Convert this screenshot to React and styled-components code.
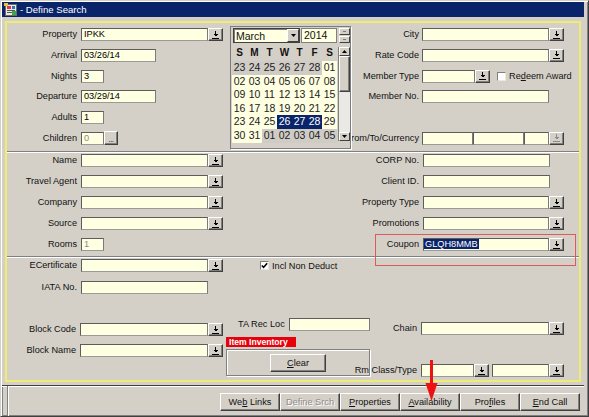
import React from "react";
import styled, { createGlobalStyle } from "styled-components";

const FONT = `"Liberation Sans", Arial, sans-serif`;

const GlobalStyle = createGlobalStyle`
  html, body { margin: 0; padding: 0; background: #D4D0C8; }
  body { font-family: ${FONT}; }
  *, *::before, *::after { box-sizing: border-box; }
`;

const Window = styled.div`
  position: relative;
  width: 589px;
  height: 417px;
  background: #d4d0c8;
  border: 1px solid;
  border-color: #d4d0c8 #404040 #404040 #d4d0c8;
  box-shadow: inset 1px 1px 0 #fff, inset -1px -1px 0 #808080;
  padding: 1px 4px 0 1px;
  display: flex;
  flex-direction: column;
  font-family: ${FONT};
  font-size: 9.2px;
  color: #111;
  overflow: hidden;
`;

const TitleBar = styled.div`
  flex: none;
  height: 15px;
  background: #0a246a;
  display: flex;
  align-items: center;
  gap: 2px;
  padding-left: 2px;
  color: #fff;
  font-size: 9.6px;
`;

const Panel = styled.div`
  flex: none;
  margin: 4px 3px 0 3px;
  height: 361px;
  border: 2px solid #eeec72;
  display: flex;
  flex-direction: column;
`;

const TopSection = styled.div`
  flex: none;
  height: 128px;
  display: grid;
  grid-template-columns: 332px 1fr;
  padding-top: 5px;
`;

const MidSection = styled.div`
  flex: none;
  height: 103px;
  display: grid;
  grid-template-columns: 332px 1fr;
  padding-top: 1px;
`;

const BottomSection = styled.div`
  flex: 1;
  display: grid;
  grid-template-columns: 219px 144px 1fr;
`;

const Sep = styled.div`
  flex: none;
  height: 2px;
  border-top: 1px solid #808080;
  border-bottom: 1px solid #fff;
`;

const Column = styled.div`
  display: flex;
  flex-direction: column;
  gap: ${(p) => p.$gap ?? 0}px;
  padding-left: ${(p) => p.$pl ?? 0}px;
`;

const Row = styled.div`
  display: flex;
  align-items: center;
  height: 13px;
  flex: none;
  margin-top: ${(p) => p.$mt ?? 0}px;
  padding-left: ${(p) => p.$pl ?? 0}px;
`;

const Label = styled.div`
  flex: none;
  width: ${(p) => (p.$w ? `${p.$w}px` : "auto")};
  display: flex;
  justify-content: flex-end;
  white-space: nowrap;
  margin-right: ${(p) => p.$gap ?? 4}px;
  line-height: 13px;
`;

const Field = styled.div`
  flex: none;
  width: ${(p) => p.$w}px;
  height: 13px;
  background: #ffffe1;
  border: 1px solid;
  border-color: #5c5c5c #7a7a7a #9a9a9a #5c5c5c;
  padding: 0 ${(p) => p.$pad ?? 2}px;
  line-height: 11px;
  color: ${(p) => (p.$disabled ? "#8a8a8a" : "#000")};
  white-space: nowrap;
  overflow: hidden;
`;

const Selected = styled.span`
  background: #0a246a;
  color: #fff;
  padding: 0 1px;
`;

const DropBtn = styled.div`
  flex: none;
  width: 15px;
  height: 13px;
  background: #d4d0c8;
  border: 1px solid;
  border-color: #fff #404040 #404040 #fff;
  box-shadow: inset -1px -1px 0 #808080;
  display: flex;
  align-items: center;
  justify-content: center;
  margin-left: ${(p) => p.$ml ?? 0}px;
`;

const DotsBtn = styled.div`
  flex: none;
  width: 14px;
  height: 14px;
  background: #d4d0c8;
  border: 1px solid;
  border-color: #fff #404040 #404040 #fff;
  box-shadow: inset -1px -1px 0 #808080;
  display: flex;
  align-items: flex-end;
  justify-content: center;
  font-size: 8px;
  line-height: 9px;
  letter-spacing: -0.5px;
`;

const CheckBox = styled.div`
  flex: none;
  width: 9px;
  height: 9px;
  background: #fff;
  border: 1px solid;
  border-color: #808080 #e8e8e8 #e8e8e8 #808080;
  margin-left: ${(p) => p.$ml ?? 0}px;
  margin-right: 3px;
  display: flex;
  align-items: center;
  justify-content: center;
`;

const U = styled.span`
  text-decoration: underline;
`;

const RedTag = styled.div`
  width: 70px;
  height: 10px;
  margin-top: 6px;
  background: #e8000a;
  color: #fff;
  font-weight: bold;
  font-size: 8.6px;
  line-height: 10px;
  padding-left: 3px;
  white-space: nowrap;
`;

const GroupBox = styled.div`
  width: 144px;
  height: 27px;
  margin-top: 2px;
  border: 1px solid #808080;
  box-shadow: inset 1px 1px 0 #fff, 1px 1px 0 #fff;
  display: flex;
  justify-content: center;
  padding-top: 4px;
`;

const Btn = styled.div`
  flex: none;
  width: ${(p) => p.$w ?? 60}px;
  height: 18px;
  display: flex;
  align-items: center;
  justify-content: center;
  background: #d4d0c8;
  border: 1px solid;
  border-color: #fff #404040 #404040 #fff;
  box-shadow: inset -1px -1px 0 #808080;
  color: ${(p) => (p.$disabled ? "#8c8c8c" : "#111")};
  text-shadow: ${(p) => (p.$disabled ? "1px 1px 0 #fff" : "none")};
  white-space: nowrap;
`;

const ButtonBar = styled.div`
  flex: 1;
  margin-top: 3px;
  border-top: 1px solid #404040;
  box-shadow: inset 0 1px 0 #fff, inset 1px 0 0 #808080;
  display: flex;
`;

const BarFrame = styled.div`
  flex: 1;
  margin-left: 5px;
  border-left: 1px solid #808080;
  box-shadow: inset 1px 0 0 #fff;
  display: flex;
  justify-content: flex-end;
  align-items: flex-start;
  padding: 7px 4px 0 0;
`;

/* ---------- calendar popup (overlays the form) ---------- */

const Calendar = styled.div`
  position: absolute;
  left: 229px;
  top: 25px;
  width: 121px;
  height: 123px;
  background: #d4d0c8;
  border: 1px solid #7c7c7c;
  box-shadow: 1px 1px 0 #fff;
  padding: 1px 0 0 1px;
  display: flex;
  flex-direction: column;
`;

const CalTop = styled.div`
  display: flex;
  height: 15px;
  margin-left: 1px;
`;

const MonthCombo = styled.div`
  width: 67px;
  height: 15px;
  background: #ffffe1;
  border: 1px solid #404040;
  box-shadow: inset 1px 1px 0 #808080;
  display: flex;
  align-items: center;
  justify-content: space-between;
  padding-left: 2px;
  font-size: 10.5px;
`;

const ComboArrow = styled.div`
  width: 12px;
  height: 13px;
  background: #d4d0c8;
  border: 1px solid;
  border-color: #fff #404040 #404040 #fff;
  display: flex;
  align-items: center;
  justify-content: center;
`;

const YearField = styled.div`
  width: 36px;
  height: 15px;
  margin-left: 1px;
  background: #ffffe1;
  border: 1px solid #808080;
  padding-left: 2px;
  font-size: 10.5px;
  line-height: 13px;
`;

const Spinner = styled.div`
  width: 11px;
  margin-left: 2px;
  display: flex;
  flex-direction: column;
  gap: 1px;
`;

const SpinBtn = styled.div`
  height: 8px;
  background: #d4d0c8;
  border: 1px solid;
  border-color: #fff #404040 #404040 #fff;
  display: flex;
  align-items: center;
  justify-content: center;
  &::after {
    content: "";
    width: 3px;
    height: 1px;
    background: #7a7a7a;
  }
`;

const CalBody = styled.div`
  display: flex;
  margin-top: 4px;
`;

const DaysCol = styled.div`
  width: 105px;
  display: flex;
  flex-direction: column;
`;

const WeekHead = styled.div`
  display: grid;
  grid-template-columns: repeat(7, 15px);
  height: 14px;
  font-weight: bold;
  font-size: 10px;
  line-height: 11px;
  text-align: center;
`;

const DayGrid = styled.div`
  display: grid;
  grid-template-columns: repeat(7, 15px);
  grid-auto-rows: 13.6px;
`;

const Day = styled.div`
  font-size: 10.5px;
  line-height: 13.6px;
  text-align: center;
  color: ${(p) => (p.$kind === "sel" ? "#fff" : "#222")};
  background: ${(p) =>
    p.$kind === "sel" ? "#0a246a" : p.$kind === "other" ? "#cfccc6" : "#ffffe1"};
`;

const ScrollBar = styled.div`
  width: 12px;
  height: 94px;
  margin-left: 1px;
  display: flex;
  flex-direction: column;
  border-left: 1px solid #808080;
`;

const ScrollBtn = styled.div`
  flex: none;
  height: 9px;
  background: #d4d0c8;
  border: 1px solid;
  border-color: #fff #404040 #404040 #fff;
  display: flex;
  align-items: center;
  justify-content: center;
`;

const Thumb = styled.div`
  flex: none;
  height: 36px;
  background: #d4d0c8;
  border: 1px solid;
  border-color: #fff #404040 #404040 #fff;
  box-shadow: inset -1px -1px 0 #808080;
`;

const Track = styled.div`
  flex: 1;
  background: #ebe9e4;
`;

/* ---------- annotations ---------- */

const RedBox = styled.div`
  position: absolute;
  left: 374px;
  top: 233px;
  width: 201px;
  height: 32px;
  border: 1px solid #dd5a5a;
  pointer-events: none;
`;

const Arrow = styled.svg`
  position: absolute;
  left: 424px;
  top: 359px;
`;

/* ---------- icons ---------- */

const LovIcon = ({ disabled }) => {
  const c = disabled ? "#8a8a8a" : "#000";
  return (
    <svg width="7" height="8" viewBox="0 0 7 8" shapeRendering="crispEdges">
      <rect x="3" y="0" width="1" height="3" fill={c} />
      <polygon points="1,3 6,3 3.5,5.5" fill={c} />
      <rect x="0" y="7" width="7" height="1" fill={c} />
    </svg>
  );
};

const Tri = ({ up }) => (
  <svg width="5" height="3" viewBox="0 0 5 3">
    <polygon points={up ? "0,3 5,3 2.5,0" : "0,0 5,0 2.5,3"} fill="#000" />
  </svg>
);

const Check = () => (
  <svg width="7" height="7" viewBox="0 0 7 7">
    <path d="M0.8 3.4 L2.6 5.3 L6.2 1.2" stroke="#000" strokeWidth="1.5" fill="none" />
  </svg>
);

const AppIcon = () => (
  <svg width="14" height="14" viewBox="0 0 14 14">
    <rect x="1.5" y="1.5" width="11" height="11" fill="#efe9dc" stroke="#6a6a6a" />
    <rect x="3" y="3" width="4" height="3" fill="#d23c4a" />
    <rect x="8" y="3" width="3" height="3" fill="#2f6fd0" />
    <rect x="3" y="7" width="8" height="1" fill="#555" />
    <rect x="3" y="9" width="5" height="1" fill="#555" />
    <rect x="8" y="8" width="4" height="4" fill="#3aa84a" />
    <rect x="0" y="0" width="4" height="3" fill="#e8c23c" />
  </svg>
);

const Dd = ({ disabled, ml }) => (
  <DropBtn $ml={ml}>
    <LovIcon disabled={disabled} />
  </DropBtn>
);

/* ---------- data ---------- */

const weeks = [
  ["23", "24", "25", "26", "27", "28", "01"],
  ["02", "03", "04", "05", "06", "07", "08"],
  ["09", "10", "11", "12", "13", "14", "15"],
  ["16", "17", "18", "19", "20", "21", "22"],
  ["23", "24", "25", "26", "27", "28", "29"],
  ["30", "31", "01", "02", "03", "04", "05"],
];

const dayKind = (r, c) => {
  if (r === 0 && c < 6) return "other";
  if (r === 5 && c > 1) return "other";
  if (r === 4 && c >= 3 && c <= 5) return "sel";
  return "day";
};

const LW = 70;
const RW = 80;

export default function App() {
  return (
    <>
      <GlobalStyle />
      <Window>
        <TitleBar>
          <AppIcon />
          <span>- Define Search</span>
        </TitleBar>

        <Panel>
          <TopSection>
            <Column $gap={7.8}>
              <Row>
                <Label $w={LW}>Property</Label>
                <Field $w={127}>IPKK</Field>
                <Dd />
              </Row>
              <Row>
                <Label $w={LW}>Arrival</Label>
                <Field $w={75}>03/26/14</Field>
              </Row>
              <Row>
                <Label $w={LW}>Nights</Label>
                <Field $w={23}>3</Field>
              </Row>
              <Row>
                <Label $w={LW}>Departure</Label>
                <Field $w={75}>03/29/14</Field>
              </Row>
              <Row>
                <Label $w={LW}>Adults</Label>
                <Field $w={23}>1</Field>
              </Row>
              <Row>
                <Label $w={LW}>Children</Label>
                <Field $w={23} $disabled>
                  0
                </Field>
                <DotsBtn>...</DotsBtn>
              </Row>
            </Column>

            <Column $gap={7.8}>
              <Row>
                <Label $w={RW} $gap={3}>City</Label>
                <Field $w={127} />
                <Dd />
              </Row>
              <Row>
                <Label $w={RW} $gap={3}>Rate Code</Label>
                <Field $w={127} />
                <Dd />
              </Row>
              <Row>
                <Label $w={RW} $gap={3}>Member Type</Label>
                <Field $w={53} />
                <Dd />
                <CheckBox $ml={7} />
                <span>
                  Re<U>d</U>eem Award
                </span>
              </Row>
              <Row>
                <Label $w={RW} $gap={3}>Member No.</Label>
                <Field $w={127} />
              </Row>
              <Row />
              <Row>
                <Label $w={RW} $gap={3}>From/To/Currency</Label>
                <Field $w={51} />
                <Field $w={51} />
                <Field $w={25} />
                <Dd disabled />
              </Row>
            </Column>
          </TopSection>

          <Sep />

          <MidSection>
            <Column $gap={8}>
              <Row>
                <Label $w={LW}>Name</Label>
                <Field $w={127} />
                <Dd />
              </Row>
              <Row>
                <Label $w={LW}>Travel Agent</Label>
                <Field $w={127} />
                <Dd />
              </Row>
              <Row>
                <Label $w={LW}>Company</Label>
                <Field $w={127} />
                <Dd />
              </Row>
              <Row>
                <Label $w={LW}>Source</Label>
                <Field $w={127} />
                <Dd />
              </Row>
              <Row>
                <Label $w={LW}>Rooms</Label>
                <Field $w={23} $disabled>
                  1
                </Field>
              </Row>
            </Column>

            <Column $gap={8}>
              <Row>
                <Label $w={RW} $gap={4}>CORP No.</Label>
                <Field $w={127} />
              </Row>
              <Row>
                <Label $w={RW} $gap={4}>Client ID.</Label>
                <Field $w={127} />
              </Row>
              <Row>
                <Label $w={RW} $gap={4}>Property Type</Label>
                <Field $w={126} />
                <Dd />
              </Row>
              <Row>
                <Label $w={RW} $gap={4}>Promotions</Label>
                <Field $w={126} />
                <Dd />
              </Row>
              <Row>
                <Label $w={RW} $gap={4}>Coupon</Label>
                <Field $w={126} $pad={0}>
                  <Selected>GLQH8MMB</Selected>
                </Field>
                <Dd />
              </Row>
            </Column>
          </MidSection>

          <Sep />

          <BottomSection>
            <Column>
              <Row $mt={1}>
                <Label $w={LW}>ECertificate</Label>
                <Field $w={127} />
                <Dd />
              </Row>
              <Row $mt={9}>
                <Label $w={LW}>IATA No.</Label>
                <Field $w={127} />
              </Row>
              <Row $mt={29}>
                <Label $w={LW - 1}>Block Code</Label>
                <Field $w={128} />
                <Dd />
              </Row>
              <Row $mt={8}>
                <Label $w={LW - 1}>Block Name</Label>
                <Field $w={128} />
                <Dd />
              </Row>
            </Column>

            <Column>
              <Row $mt={1} $pl={34}>
                <CheckBox>
                  <Check />
                </CheckBox>
                <span>Incl Non Deduct</span>
              </Row>
              <Row $mt={46} $pl={12}>
                <Label>TA Rec Loc</Label>
                <Field $w={81} />
              </Row>
              <RedTag>Item Inventory</RedTag>
              <GroupBox>
                <Btn $w={56}>
                  <span>
                    <U>C</U>lear
                  </span>
                </Btn>
              </GroupBox>
            </Column>

            <Column>
              <Row $mt={64}>
                <Label $w={47}>Chain</Label>
                <Field $w={128} />
                <Dd />
              </Row>
              <Row $mt={29}>
                <Label $w={47}>Rm Class/Type</Label>
                <Field $w={53} />
                <Dd />
                <Field $w={57} style={{ marginLeft: 3 }} />
                <Dd />
              </Row>
            </Column>
          </BottomSection>
        </Panel>

        <ButtonBar>
          <BarFrame>
            <Btn>
              <span>
                We<U>b</U> Links
              </span>
            </Btn>
            <Btn $disabled>Define Srch</Btn>
            <Btn>
              <span>
                <U>P</U>roperties
              </span>
            </Btn>
            <Btn>
              <span>
                <U>A</U>vailability
              </span>
            </Btn>
            <Btn>
              <span>
                Pro<U>f</U>iles
              </span>
            </Btn>
            <Btn>
              <span>
                <U>E</U>nd Call
              </span>
            </Btn>
          </BarFrame>
        </ButtonBar>

        <Calendar>
          <CalTop>
            <MonthCombo>
              <span>March</span>
              <ComboArrow>
                <Tri />
              </ComboArrow>
            </MonthCombo>
            <YearField>2014</YearField>
            <Spinner>
              <SpinBtn />
              <SpinBtn />
            </Spinner>
          </CalTop>
          <CalBody>
            <DaysCol>
              <WeekHead>
                {["S", "M", "T", "W", "T", "F", "S"].map((d, i) => (
                  <span key={i}>{d}</span>
                ))}
              </WeekHead>
              <DayGrid>
                {weeks.map((w, r) =>
                  w.map((d, c) => (
                    <Day key={`${r}-${c}`} $kind={dayKind(r, c)}>
                      {d}
                    </Day>
                  ))
                )}
              </DayGrid>
            </DaysCol>
            <ScrollBar>
              <ScrollBtn>
                <Tri up />
              </ScrollBtn>
              <Thumb />
              <Track />
              <ScrollBtn>
                <Tri />
              </ScrollBtn>
            </ScrollBar>
          </CalBody>
        </Calendar>

        <RedBox />
        <Arrow width="13" height="42" viewBox="0 0 13 42">
          <rect x="5" y="0" width="3" height="24" fill="#ee1111" />
          <polygon points="0.5,23 12.5,23 6.5,41" fill="#ee1111" />
        </Arrow>
      </Window>
    </>
  );
}
